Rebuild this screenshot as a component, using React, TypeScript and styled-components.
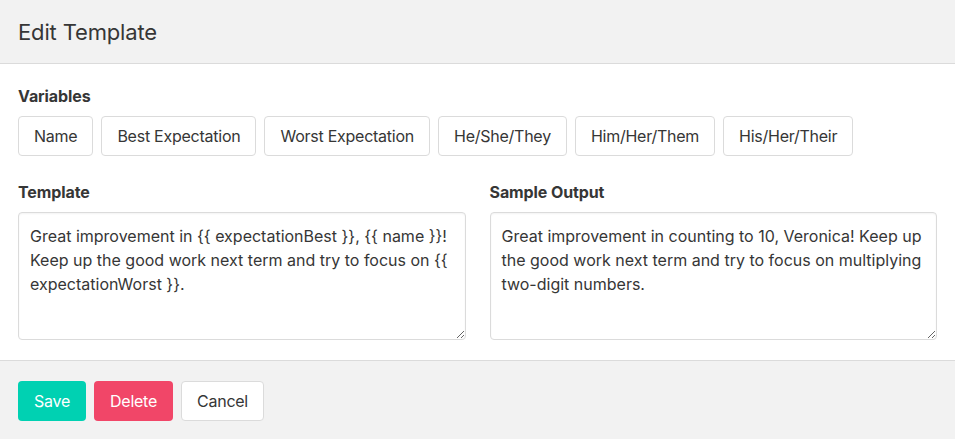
import React from "react";
import styled, { createGlobalStyle, css } from "styled-components";

const GlobalStyle = createGlobalStyle`
    html, body {
        margin: 0;
        padding: 0;
        overflow: hidden;
        background: #ffffff;
    }
    body {
        font-family: "Inter", "Noto Sans", "Liberation Sans", sans-serif;
        color: #4a4a4a;
        font-size: 16px;
    }
    * {
        box-sizing: border-box;
    }
`;

const ModalCard = styled.div`
    display: flex;
    flex-direction: column;
    width: 955px;
`;

const CardHead = styled.header`
    display: flex;
    align-items: center;
    height: 64px;
    padding: 0 18px;
    background: #f2f2f2;
    border-bottom: 1px solid #dbdbdb;
`;

const CardTitle = styled.h1`
    margin: 0;
    font-size: 22px;
    font-weight: 400;
    letter-spacing: -0.15px;
    line-height: 1;
    color: #363636;
`;

const CardBody = styled.section`
    display: flex;
    flex-direction: column;
    gap: 24px;
    padding: 20px 18px;
    background: #ffffff;
`;

const Field = styled.div`
    display: flex;
    flex-direction: column;
    gap: 8px;
`;

const Label = styled.label`
    font-size: 16px;
    font-weight: 700;
    line-height: 24px;
    letter-spacing: -0.1px;
    color: #363636;
`;

const Buttons = styled.div`
    display: flex;
    gap: 8px;
`;

const Button = styled.button<{ variant?: "primary" | "danger" }>`
    height: 40px;
    padding: 0 15px;
    border: 1px solid #dbdbdb;
    border-radius: 4px;
    background: #ffffff;
    color: #363636;
    font-family: inherit;
    font-size: 16px;
    letter-spacing: -0.25px;
    line-height: 1.5;
    cursor: pointer;
    ${({ variant }) => variant === "primary" && css`
        background: #00d1b2;
        border-color: transparent;
        color: #ffffff;
    `}
    ${({ variant }) => variant === "danger" && css`
        background: #f14668;
        border-color: transparent;
        color: #ffffff;
    `}
`;

const Columns = styled.div`
    display: grid;
    grid-template-columns: 1fr 1fr;
    gap: 24px;
`;

const TextArea = styled.textarea`
    width: 100%;
    height: 128px;
    padding: 11px;
    border: 1px solid #dbdbdb;
    border-radius: 4px;
    box-shadow: inset 0 1px 2px rgba(10, 10, 10, 0.05);
    font-family: inherit;
    font-size: 16px;
    line-height: 24px;
    color: #363636;
    resize: vertical;
    outline: none;
`;

const CardFoot = styled.footer`
    display: flex;
    gap: 8px;
    padding: 20px 18px;
    background: #f2f2f2;
    border-top: 1px solid #dbdbdb;
`;

const variables = [
    "Name",
    "Best Expectation",
    "Worst Expectation",
    "He/She/They",
    "Him/Her/Them",
    "His/Her/Their",
];

const template =
    "Great improvement in {{ expectationBest }}, {{ name }}! Keep up the good work next term and try to focus on {{ expectationWorst }}.";
const sample =
    "Great improvement in counting to 10, Veronica! Keep up the good work next term and try to focus on multiplying two-digit numbers.";

const App = () => {
    return (
        <>
            <GlobalStyle />
            <ModalCard>
                <CardHead>
                    <CardTitle>Edit Template</CardTitle>
                </CardHead>
                <CardBody>
                    <Field>
                        <Label>Variables</Label>
                        <Buttons>
                            {variables.map((v) => (
                                <Button key={v}>{v}</Button>
                            ))}
                        </Buttons>
                    </Field>
                    <Columns>
                        <Field>
                            <Label>Template</Label>
                            <TextArea defaultValue={template} spellCheck={false} />
                        </Field>
                        <Field>
                            <Label>Sample Output</Label>
                            <TextArea value={sample} readOnly spellCheck={false} />
                        </Field>
                    </Columns>
                </CardBody>
                <CardFoot>
                    <Button variant="primary">Save</Button>
                    <Button variant="danger">Delete</Button>
                    <Button>Cancel</Button>
                </CardFoot>
            </ModalCard>
        </>
    );
};

export default App;
